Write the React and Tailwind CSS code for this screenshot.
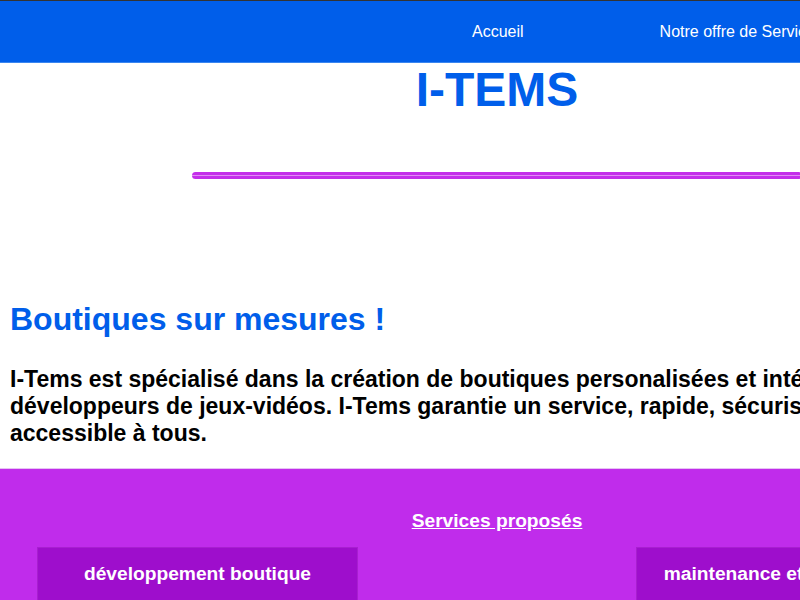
export default function App() {
  return (
    <div className="w-[994px] bg-white font-['Liberation_Sans',Arial,sans-serif]">
      <header className="h-[63px] bg-[#005eea] border-t border-[#333333] border-b border-b-[#3a86f0]">
        <nav className="h-full">
          <ul className="flex h-full items-center pl-[472px] gap-[136px] text-white text-base whitespace-nowrap">
            <li>
              <a href="#">Accueil</a>
            </li>
            <li>
              <a href="#">Notre offre de Services</a>
            </li>
            <li>
              <a href="#">Contact</a>
            </li>
          </ul>
        </nav>
      </header>

      <h1 className="text-center text-[48px] font-bold text-[#005eea] leading-[54px]">I-TEMS</h1>

      <div className="mx-auto mt-[55px] w-[610px] h-[7px] rounded-full bg-[#c42eea] flex items-center">
        <div className="h-px w-full bg-[#e08cf6]" />
      </div>

      <section className="px-[10px] pt-[122px] pb-[21px]">
        <h2 className="text-[32px] font-bold text-[#005eea] leading-[37px]">Boutiques sur mesures !</h2>
        <p className="mt-[28px] text-[23px] font-bold text-black leading-[27px]">
          I-Tems est spécialisé dans la création de boutiques personalisées et intégrées pour les
          <br />
          développeurs de jeux-vidéos. I-Tems garantie un service, rapide, sécurisé et efficace,
          <br />
          accessible à tous.
        </p>
      </section>

      <section className="border-t border-[#e6c2f2] bg-[#c02ceb] pt-[41px] pb-[40px]">
        <h3 className="text-center text-[19.2px] font-bold text-white underline leading-[22px]">
          Services proposés
        </h3>
        <div className="mt-[15px] flex justify-between px-[37px]">
          <div className="w-[321px] min-h-[120px] bg-[#9e0ecc] border border-[#a81fd0] pt-[15px] text-center">
            <h4 className="text-[19.2px] font-bold text-white leading-[22px]">développement boutique</h4>
          </div>
          <div className="w-[321px] min-h-[120px] bg-[#9e0ecc] border border-[#a81fd0] pt-[15px] text-center">
            <h4 className="text-[19.2px] font-bold text-white leading-[22px]">maintenance et hébergement</h4>
          </div>
        </div>
      </section>
    </div>
  )
}
